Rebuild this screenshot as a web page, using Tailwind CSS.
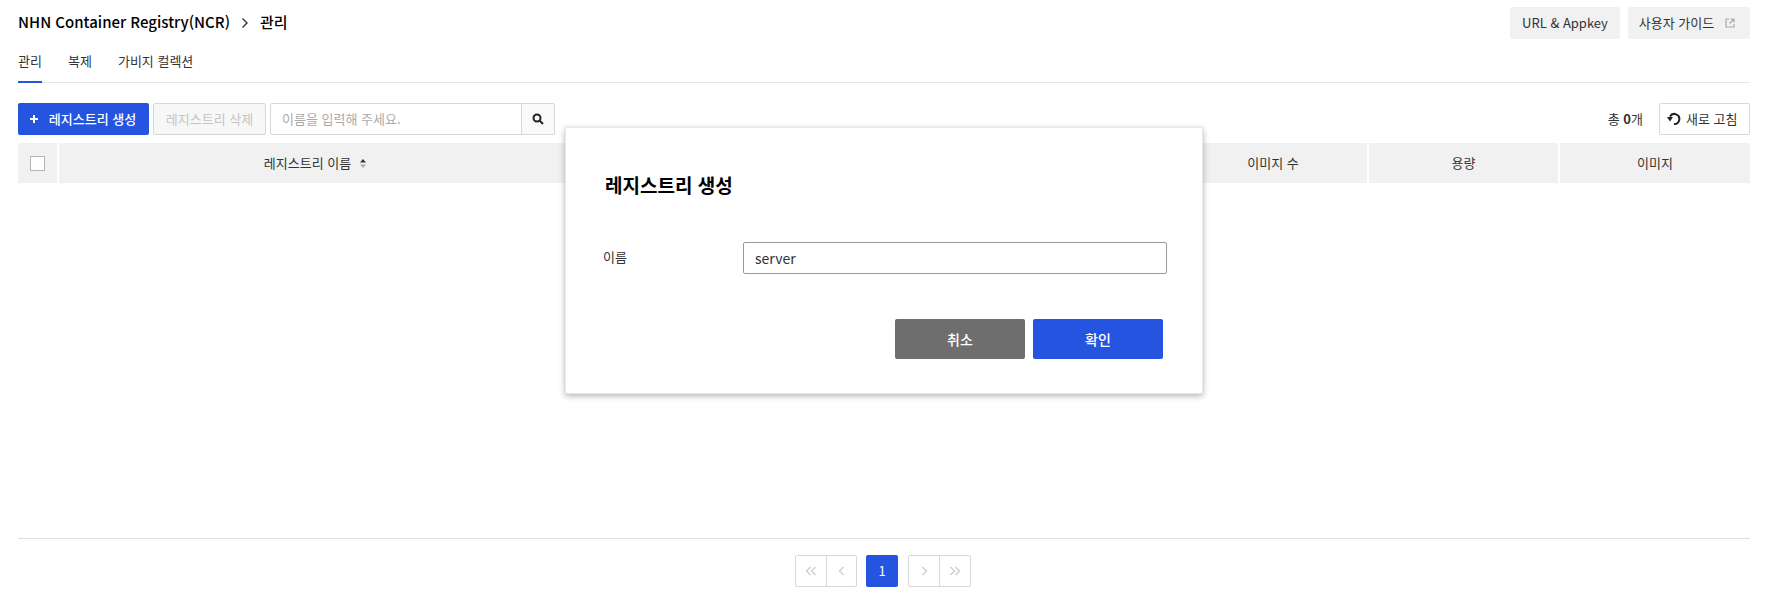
<!DOCTYPE html>
<html lang="ko">
<head>
    <meta charset="UTF-8">
    <title>NHN Container Registry(NCR)</title>
    <script src="https://cdn.jsdelivr.net/npm/@tailwindcss/browser@4"></script>
</head>
<body class="bg-white overflow-hidden font-['Noto_Sans_CJK_KR','Noto_Sans',sans-serif] text-[#222]">
    <div class="relative w-[1766px] h-[598px] pl-[18px] pr-[16px] flex flex-col">
        <!-- header -->
        <div class="h-[44px] flex items-start justify-between pt-[7px]">
            <div class="flex items-center h-[31px] text-[15px] font-medium text-black">
                <span>NHN Container Registry(NCR)</span>
                <svg class="w-[12px] h-[12px] mx-[9px]" viewBox="0 0 12 12" fill="none" stroke="#333" stroke-width="1.4"><path d="M3.5 1.5 8 6l-4.500 4.500"/></svg>
                <span>관리</span>
            </div>
            <div class="flex gap-[8px] text-[13px] text-[#333]">
                <button class="w-[110px] h-[32px] bg-[#f1f1f1] rounded-[2px]">URL &amp; Appkey</button>
                <button class="w-[122px] h-[32px] pr-[4px] bg-[#f1f1f1] rounded-[2px] flex items-center justify-center gap-[11px]">
                    사용자 가이드
                    <svg class="w-[10px] h-[10px]" viewBox="0 0 10 10" fill="none" stroke="#aaa" stroke-width="1.200"><path d="M4 1H1v8h8V6M5.500 1H9v3.500M9 1 4.500 5.500"/></svg>
                </button>
            </div>
        </div>

        <!-- tabs -->
        <div class="h-[39px] flex gap-[26px] border-b border-[#e5e5e5] text-[13px] text-[#333]">
            <div class="h-[39px] w-[24px] pt-[7px] border-b-2 border-[#2555e0] text-center whitespace-nowrap">관리</div>
            <div class="pt-[7px]">복제</div>
            <div class="pt-[7px]">가비지 컬렉션</div>
        </div>

        <!-- toolbar -->
        <div class="mt-[20px] h-[32px] flex items-center text-[13px]">
            <button class="w-[131px] h-[32px] pr-[2px] bg-[#2555e0] text-white font-medium rounded-[2px] flex items-center justify-center gap-[10px]">
                <svg class="w-[10px] h-[10px]" viewBox="0 0 10 10" stroke="#fff" stroke-width="2"><path d="M5 1v8M1 5h8"/></svg>
                레지스트리 생성
            </button>
            <button class="ml-[4px] w-[113px] h-[32px] bg-[#f7f7f7] border border-[#d8d8d8] text-[#c4c4c4] rounded-[2px]">레지스트리 삭제</button>
            <div class="ml-[4px] w-[285px] h-[32px] flex border border-[#d8d8d8] rounded-[2px]">
                <div class="flex-1 pl-[11px] flex items-center text-[#aaa] border-r border-[#d8d8d8]">이름을 입력해 주세요.</div>
                <div class="w-[32px] flex items-center justify-center bg-[#fafafa]">
                    <svg class="w-[12px] h-[12px]" viewBox="0 0 12 12" fill="none" stroke="#222" stroke-width="2"><circle cx="5" cy="5" r="3.500"/><path d="m7.500 7.500 3.500 3.500"/></svg>
                </div>
            </div>
            <div class="ml-auto text-[#333]">총 <b class="font-bold">0</b>개</div>
            <button class="ml-[16px] w-[91px] h-[32px] pl-[7px] border border-[#d8d8d8] rounded-[2px] text-[#333] flex items-center gap-[5px]">
                <svg class="w-[14px] h-[14px]" viewBox="0 0 14 14" fill="none" stroke="#222" stroke-width="2"><path d="M7 12A5 5 0 1 0 3 4.500"/><path d="M0 5h6L3 9.500z" fill="#222" stroke="none"/></svg>
                새로 고침
            </button>
        </div>

        <!-- table header -->
        <div class="mt-[8px] h-[40px] bg-[#f1f1f1] flex text-[13px] text-[#333]">
            <div class="w-[41px] flex items-center justify-center border-r-2 border-white">
                <span class="w-[15px] h-[15px] bg-white border border-[#b5b5b5]"></span>
            </div>
            <div class="w-[514px] flex items-center justify-center gap-[9px] border-r-2 border-white">
                레지스트리 이름
                <svg class="w-[6px] h-[9px]" viewBox="0 0 6 9"><path d="M3 0l3 3.500H0z" fill="#333"/><path d="M3 9 0 5.500h6z" fill="#aaa"/></svg>
            </div>
            <div class="flex-1"></div>
            <div class="w-[190px] flex items-center justify-center border-r-2 border-white">이미지 수</div>
            <div class="w-[191px] flex items-center justify-center border-r-2 border-white">용량</div>
            <div class="w-[190px] flex items-center justify-center">이미지</div>
        </div>

        <!-- pagination -->
        <div class="mt-auto h-[60px] border-t border-[#e0e0e0] flex justify-center pr-[2px] pt-[16px] text-[#d0d0d0]">
            <div class="flex h-[32px] w-[62px] border border-[#d8d8d8] rounded-[2px]">
                <div class="flex-1 flex items-center justify-center border-r border-[#d8d8d8]">
                    <svg class="w-[12px] h-[10px]" viewBox="0 0 12 10" fill="none" stroke="currentColor" stroke-width="1.500"><path d="M5.500 1 1.500 5l4 4M10.500 1l-4 4 4 4"/></svg>
                </div>
                <div class="flex-1 flex items-center justify-center">
                    <svg class="w-[7px] h-[10px]" viewBox="0 0 7 10" fill="none" stroke="currentColor" stroke-width="1.500"><path d="M5.500 1 1.500 5l4 4"/></svg>
                </div>
            </div>
            <div class="ml-[9px] w-[32px] h-[32px] bg-[#2555e0] text-white text-[13px] rounded-[2px] flex items-center justify-center">1</div>
            <div class="ml-[10px] flex h-[32px] w-[63px] border border-[#d8d8d8] rounded-[2px]">
                <div class="flex-1 flex items-center justify-center border-r border-[#d8d8d8]">
                    <svg class="w-[7px] h-[10px]" viewBox="0 0 7 10" fill="none" stroke="currentColor" stroke-width="1.500"><path d="m1.500 1 4 4-4 4"/></svg>
                </div>
                <div class="flex-1 flex items-center justify-center">
                    <svg class="w-[12px] h-[10px]" viewBox="0 0 12 10" fill="none" stroke="currentColor" stroke-width="1.500"><path d="m1.500 1 4 4-4 4M6.500 1l4 4-4 4"/></svg>
                </div>
            </div>
        </div>

        <!-- modal -->
        <div class="absolute left-[565px] top-[127px] w-[638px] h-[267px] bg-white rounded-[2px] border border-[#e8e8e8] shadow-[0_2px_6px_rgba(0,0,0,0.3)] pt-[42px] px-[37px]">
            <h2 class="text-[19px] font-bold text-black leading-[30px] pl-[2px]">레지스트리 생성</h2>
            <div class="mt-[42px] flex items-center">
                <label class="w-[140px] shrink-0 pb-[2px] text-[13px] text-[#333]">이름</label>
                <input type="text" value="server" class="w-[424px] shrink-0 h-[32px] px-[11px] border border-[#999] rounded-[2px] text-[14px] text-[#333] outline-none">
            </div>
            <div class="mt-[45px] flex justify-end gap-[8px] pr-[2px]">
                <button class="w-[130px] h-[40px] bg-[#6e6e6e] text-white text-[14px] font-medium rounded-[2px]">취소</button>
                <button class="w-[130px] h-[40px] bg-[#2555e0] text-white text-[14px] font-medium rounded-[2px]">확인</button>
            </div>
        </div>
    </div>
</body>
</html>
